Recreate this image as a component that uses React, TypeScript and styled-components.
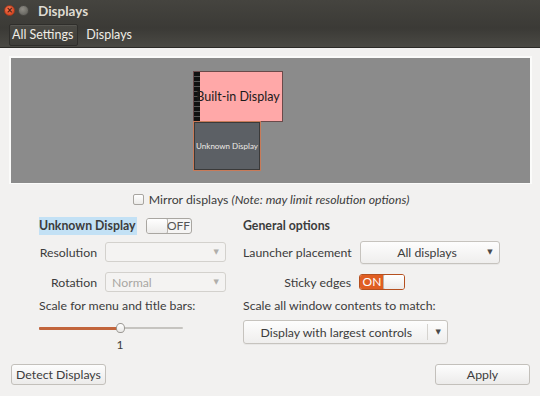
import React from "react";
import styled, { createGlobalStyle, css } from "styled-components";

const Global = createGlobalStyle`
  html, body { margin: 0; padding: 0; }
  body { width: 540px; height: 396px; overflow: hidden; background: #f2f1f0; font-family: "Lato", "Noto Sans", sans-serif; font-size: 12.3px; color: #3c3c3c; }
  * { box-sizing: border-box; }
`;

const Window = styled.div`
  width: 540px;
  height: 396px;
  display: flex;
  flex-direction: column;
  background: #f2f1f0;
`;

const TitleBar = styled.div`
  height: 48px;
  background: linear-gradient(#45443f, #3b3a36 60%, #4a4944);
  display: flex;
  flex-direction: column;
  border-bottom: 1px solid #2b2a27;
`;

const TitleRow = styled.div`
  height: 21px;
  display: flex;
  align-items: center;
  padding-left: 4px;
  gap: 3px;
`;

const WinBtn = styled.div<{ $close?: boolean }>`
  width: 11px;
  height: 11px;
  border-radius: 50%;
  position: relative;
  ${(p) =>
    p.$close
      ? css`background: radial-gradient(circle at 40% 35%, #f27a58, #dc4a26 70%); border: 1px solid #9a3a1e;`
      : css`background: radial-gradient(circle at 40% 35%, #8f8d86, #6a6963 70%); border: 1px solid #4a4945;`}
`;

const CloseX = styled.span`
  position: absolute;
  inset: 0;
  color: #4a1a0c;
  font-size: 8px;
  line-height: 9px;
  text-align: center;
  font-weight: bold;
  font-family: "DejaVu Sans", sans-serif;
`;

const Title = styled.div`
  margin-left: 6px;
  color: #dfdbd2;
  font-weight: bold;
  font-size: 13.5px;
`;

const Crumbs = styled.div`
  display: flex;
  align-items: center;
  gap: 5px;
  padding: 2px 0 0 9px;
  height: 25px;
`;

const Crumb = styled.div<{ $first?: boolean }>`
  height: 22px;
  display: flex;
  align-items: center;
  padding: 0 3px;
  color: #f0ede6;
  font-size: 12.5px;
  ${(p) =>
    p.$first &&
    css`
      border: 1px solid #2f2e2b;
      border-radius: 2px;
      background: linear-gradient(#4a4944, #3f3e3a);
      box-shadow: inset 0 1px 0 rgba(255,255,255,0.08);
      padding: 0 4px 0 2px;
    `}
`;

const Content = styled.div`
  flex: 1;
  display: flex;
  flex-direction: column;
  padding: 8px 8px 0 9px;
`;

const Canvas = styled.div`
  position: relative;
  height: 128px;
  width: 523px;
  background: #8b8b8b;
  border: 2px solid #fbfbfa;
  border-bottom-width: 1px;
`;

const Monitor = styled.div<{ $primary?: boolean }>`
  position: absolute;
  display: flex;
  align-items: center;
  justify-content: center;
  ${(p) =>
    p.$primary
      ? css`
          left: 182px; top: 13px; width: 90px; height: 51px;
          background: #ffa8a8;
          border: 1px solid #6a4a4a;
          color: #1a1a1a;
          font-size: 12.5px;
        `
      : css`
          left: 182px; top: 63px; width: 68px; height: 50px;
          background: #5c6065;
          border: 1px solid #c87a58;
          box-shadow: inset 0 0 0 1px #3a3a3a;
          color: #eceae6;
          font-size: 8px;
        `}
`;

const Launcher = styled.div`
  position: absolute;
  left: 0;
  top: 0;
  bottom: 0;
  width: 6px;
  background: repeating-linear-gradient(#111 0 4px, #555 4px 5px);
`;

const MonLabel = styled.span`
  position: relative;
  white-space: nowrap;
`;

const MirrorRow = styled.div`
  height: 30px;
  display: flex;
  align-items: center;
  justify-content: center;
  gap: 5px;
  padding-left: 1px;
  padding-top: 1px;
`;

const Check = styled.span`
  width: 11px;
  height: 11px;
  border: 1px solid #a8a5a0;
  border-radius: 2px;
  background: linear-gradient(#fff, #ecebe9);
`;

const Note = styled.i`
  font-style: italic;
`;

const Columns = styled.div`
  display: flex;
  padding-left: 30px;
`;

const LeftCol = styled.div`
  width: 204px;
  display: flex;
  flex-direction: column;
`;

const RightCol = styled.div`
  flex: 1;
  display: flex;
  flex-direction: column;
`;

const Row = styled.div<{ $h: number; $gap?: number }>`
  height: ${(p) => p.$h}px;
  display: flex;
  align-items: center;
  gap: ${(p) => p.$gap ?? 8}px;
`;

const Heading = styled.span<{ $hl?: boolean }>`
  font-weight: bold;
  padding: 1px 1px 2px 0;
  ${(p) => p.$hl && css`background: #c3e1f5;`}
`;

const FieldLabel = styled.span<{ $w?: number }>`
  width: ${(p) => (p.$w ? `${p.$w}px` : "auto")};
  text-align: right;
  white-space: nowrap;
`;

const Switch = styled.div<{ $on?: boolean }>`
  width: 46px;
  height: 16px;
  border: 1px solid #a9a6a1;
  border-radius: 3px;
  display: flex;
  overflow: hidden;
  font-size: 12px;
  background: #f6f5f4;
  ${(p) => p.$on && css`border-color: #b5501f;`}
`;

const Knob = styled.div`
  width: 22px;
  background: linear-gradient(#ffffff, #ecebea);
  border: 1px solid #b8b5b0;
  border-radius: 2px;
  margin: -1px;
`;

const SwitchText = styled.div<{ $on?: boolean }>`
  flex: 1;
  display: flex;
  align-items: center;
  justify-content: center;
  line-height: 1;
  ${(p) =>
    p.$on
      ? css`background: #e05e22; color: #fff;`
      : css`color: #555;`}
`;

const Combo = styled.div<{ $w: number; $disabled?: boolean; $h?: number }>`
  width: ${(p) => p.$w}px;
  height: ${(p) => p.$h ?? 20}px;
  border: 1px solid #c6c3be;
  border-radius: 3px;
  display: flex;
  align-items: center;
  padding: 0 6px 0 6px;
  ${(p) =>
    p.$disabled
      ? css`background: #f4f3f2; color: #a9a7a3; border-color: #d3d1cd;`
      : css`background: linear-gradient(#fdfdfd, #efeeed); color: #3c3c3c; box-shadow: 0 1px 0 rgba(0,0,0,0.04);`}
`;

const ComboText = styled.span<{ $center?: boolean }>`
  flex: 1;
  text-align: ${(p) => (p.$center ? "center" : "left")};
  white-space: nowrap;
`;

const Arrow = styled.span<{ $disabled?: boolean }>`
  font-size: 7px;
  color: ${(p) => (p.$disabled ? "#b0aeaa" : "#4a4a4a")};
  font-family: "DejaVu Sans", sans-serif;
`;

const Sep = styled.span`
  width: 1px;
  align-self: stretch;
  margin: 3px 8px 3px 4px;
  background: #d5d3cf;
`;

const SliderWrap = styled.div`
  width: 144px;
  height: 18px;
  margin-top: 6px;
  position: relative;
  display: flex;
  align-items: center;
`;

const Track = styled.div`
  flex: 1;
  height: 2px;
  background: #c6c4c0;
  border-radius: 1px;
`;

const Fill = styled.div`
  position: absolute;
  left: 0;
  height: 3px;
  background: #c2653c;
  border-radius: 1px;
`;

const Thumb = styled.div`
  position: absolute;
  width: 9px;
  height: 10px;
  top: 4px;
  border: 1px solid #9c9994;
  border-radius: 50% 50% 45% 45%;
  background: linear-gradient(#fff, #e9e8e6);
`;

const SliderValue = styled.div`
  width: 162px;
  text-align: center;
  font-size: 12px;
  margin-top: 0px;
`;

const Footer = styled.div`
  display: flex;
  justify-content: space-between;
  margin-top: auto;
  padding: 0 2px 11px 2px;
`;

const Button = styled.div<{ $w: number }>`
  width: ${(p) => p.$w}px;
  height: 21px;
  border: 1px solid #c3c0bb;
  border-radius: 3px;
  background: linear-gradient(#fdfdfd, #ecebea);
  display: flex;
  align-items: center;
  justify-content: center;
  white-space: nowrap;
`;

export default function App() {
  const pct = 0.56;
  return (
    <Window>
      <Global />
      <TitleBar>
        <TitleRow>
          <WinBtn $close>
            <CloseX>×</CloseX>
          </WinBtn>
          <WinBtn />
          <Title>Displays</Title>
        </TitleRow>
        <Crumbs>
          <Crumb $first>All Settings</Crumb>
          <Crumb>Displays</Crumb>
        </Crumbs>
      </TitleBar>
      <Content>
        <Canvas>
          <Monitor $primary>
            <Launcher />
            <MonLabel>Built-in Display</MonLabel>
          </Monitor>
          <Monitor>
            <MonLabel>Unknown Display</MonLabel>
          </Monitor>
        </Canvas>
        <MirrorRow>
          <Check />
          <span>
            Mirror displays <Note>(Note: may limit resolution options)</Note>
          </span>
        </MirrorRow>
        <Columns>
          <LeftCol>
            <Row $h={23} $gap={9}>
              <Heading $hl>Unknown Display</Heading>
              <Switch>
                <Knob />
                <SwitchText>OFF</SwitchText>
              </Switch>
            </Row>
            <Row $h={30}>
              <FieldLabel $w={58}>Resolution</FieldLabel>
              <Combo $w={121} $disabled>
                <ComboText />
                <Arrow $disabled>▼</Arrow>
              </Combo>
            </Row>
            <Row $h={30}>
              <FieldLabel $w={58}>Rotation</FieldLabel>
              <Combo $w={121} $disabled>
                <ComboText>Normal</ComboText>
                <Arrow $disabled>▼</Arrow>
              </Combo>
            </Row>
            <Row $h={16}>
              <span>Scale for menu and title bars:</span>
            </Row>
            <SliderWrap>
              <Track />
              <Fill style={{ width: `${pct * 144}px` }} />
              <Thumb style={{ left: `${pct * 144 - 4}px` }} />
            </SliderWrap>
            <SliderValue>1</SliderValue>
          </LeftCol>
          <RightCol>
            <Row $h={23}>
              <Heading>General options</Heading>
            </Row>
            <Row $h={30}>
              <FieldLabel>Launcher placement</FieldLabel>
              <Combo $w={140} $h={23}>
                <ComboText $center>All displays</ComboText>
                <Arrow>▼</Arrow>
              </Combo>
            </Row>
            <Row $h={30}>
              <FieldLabel $w={108}>Sticky edges</FieldLabel>
              <Switch $on>
                <SwitchText $on>ON</SwitchText>
                <Knob />
              </Switch>
            </Row>
            <Row $h={16}>
              <span>Scale all window contents to match:</span>
            </Row>
            <Row $h={34} style={{ marginTop: 2 }}>
              <Combo $w={205} $h={24}>
                <ComboText $center>Display with largest controls</ComboText>
                <Sep />
                <Arrow>▼</Arrow>
              </Combo>
            </Row>
          </RightCol>
        </Columns>
        <Footer>
          <Button $w={95}>Detect Displays</Button>
          <Button $w={95}>Apply</Button>
        </Footer>
      </Content>
    </Window>
  );
}
